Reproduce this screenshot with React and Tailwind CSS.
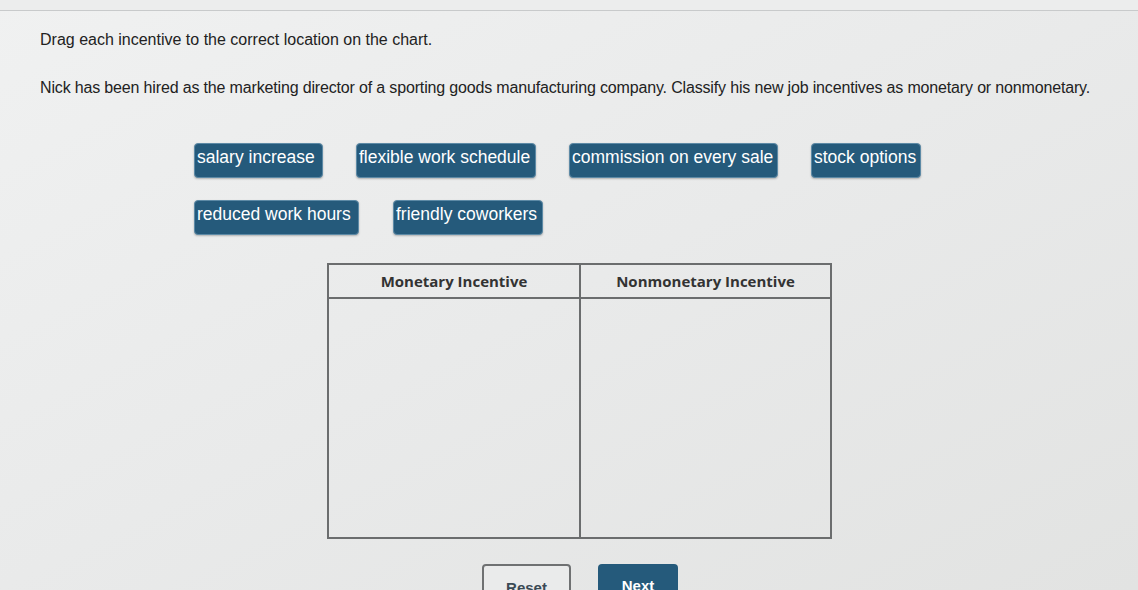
import React from 'react';

const chipsTop = [
    { label: 'salary increase', w: 'w-[129px]' },
    { label: 'flexible work schedule', w: 'w-[180px]' },
    { label: 'commission on every sale', w: 'w-[209px]' },
    { label: 'stock options', w: 'w-[110px]' },
];

const chipsBottom = [
    { label: 'reduced work hours', w: 'w-[165px]' },
    { label: 'friendly coworkers', w: 'w-[150px]' },
];

const Chip = ({ label, w }) => (
    <div className={`${w} h-[35px] rounded-[4px] bg-[#255a7b] border border-[#5d8aa6] shadow-[0_1px_2px_rgba(0,0,0,0.25)] text-white text-[17.5px] leading-[20px] pl-[2px] pt-[3px] whitespace-nowrap overflow-hidden`}>
        {label}
    </div>
);

export default function App() {
    return (
        <div className="w-[1138px] h-[590px] overflow-hidden bg-gradient-to-br from-[#f0f1f1] via-[#e9eaea] to-[#e2e3e2] text-[#222] font-['Liberation_Sans',Arial,sans-serif]">
            {/* top strip */}
            <div className="h-[11px] border-b border-[#c8cacb] bg-[#eceded]"></div>

            <div className="pl-[40px] pt-[19px] text-[16px] leading-[19px]">
                Drag each incentive to the correct location on the chart.
            </div>
            <div className="pl-[40px] pt-[29px] text-[16px] leading-[19px] tracking-[-0.16px]">
                Nick has been hired as the marketing director of a sporting goods manufacturing company. Classify his new job incentives as monetary or nonmonetary.
            </div>

            {/* chips */}
            <div className="pl-[194px] pt-[46px] flex gap-[33px]">
                {chipsTop.map(c => <Chip key={c.label} {...c} />)}
            </div>
            <div className="pl-[194px] pt-[22px] flex gap-[34px]">
                {chipsBottom.map(c => <Chip key={c.label} {...c} />)}
            </div>

            {/* chart */}
            <div className="pl-[327px] pt-[28px]">
                <div className="w-[505px] border-2 border-[#6b6d6e] grid grid-cols-[252px_249px] font-['Open_Sans',sans-serif]">
                    <div className="h-[34px] border-b-2 border-r-2 border-[#6b6d6e] flex items-center justify-center font-bold text-[15px] text-[#333]">
                        Monetary Incentive
                    </div>
                    <div className="h-[34px] border-b-2 border-[#6b6d6e] flex items-center justify-center font-bold text-[15px] text-[#333]">
                        Nonmonetary Incentive
                    </div>
                    <div className="h-[238px] border-r-2 border-[#6b6d6e]"></div>
                    <div className="h-[238px]"></div>
                </div>
            </div>

            {/* buttons */}
            <div className="pl-[482px] pt-[25px] flex gap-[27px]">
                <div className="w-[89px] h-[36px] rounded-[4px] border-2 border-[#6f7172] bg-[#eaebeb] flex justify-center pt-[11px] font-bold text-[15px] text-[#3b4a55]">
                    Reset
                </div>
                <div className="w-[80px] h-[36px] rounded-[4px] bg-[#255a7b] flex justify-center pt-[11px] font-bold text-[15px] text-white">
                    Next
                </div>
            </div>
        </div>
    );
}
